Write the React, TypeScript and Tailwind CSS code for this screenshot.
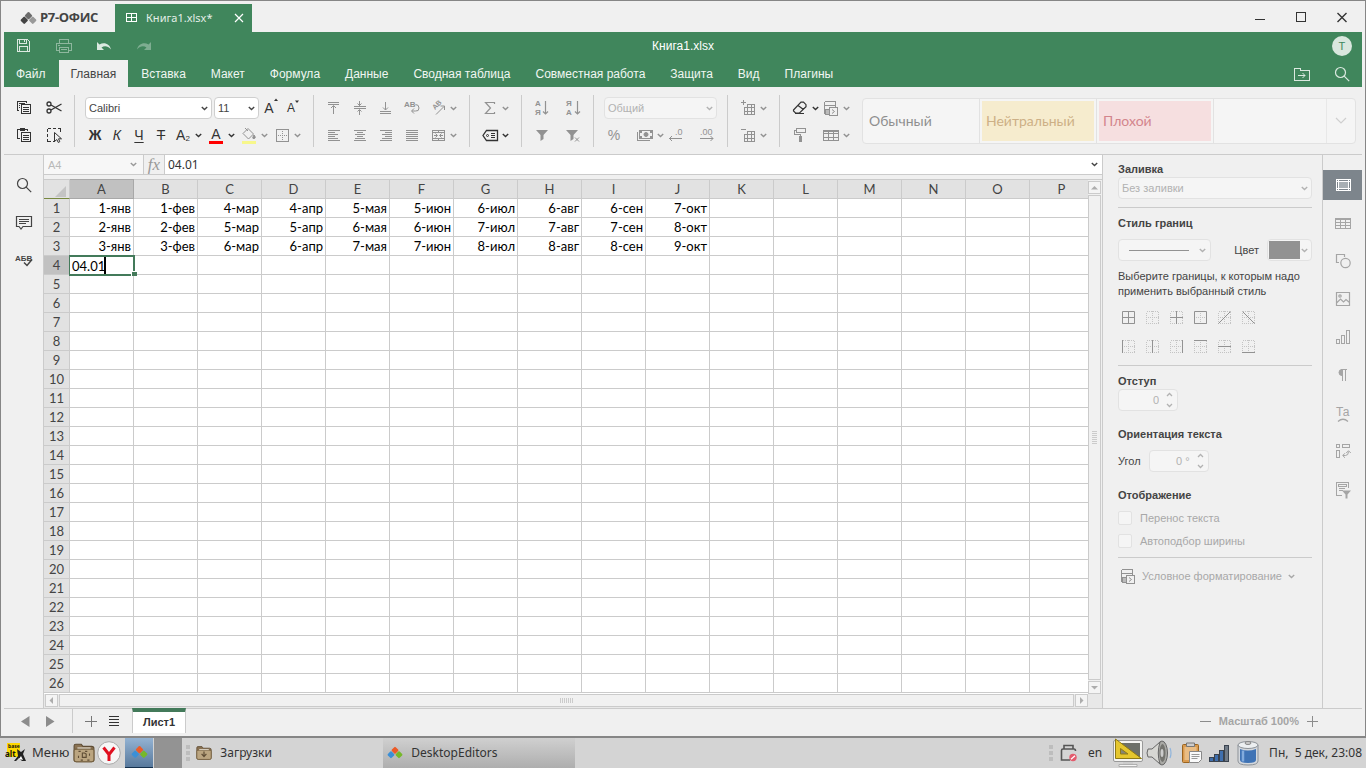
import type { ReactNode } from "react";
import clsx from "clsx";

const MENU = [
  "Файл",
  "Главная",
  "Вставка",
  "Макет",
  "Формула",
  "Данные",
  "Сводная таблица",
  "Совместная работа",
  "Защита",
  "Вид",
  "Плагины",
];

const COLUMNS = "ABCDEFGHIJKLMNOP".split("");

const CELLS: string[][] = [
  ["1-янв", "1-фев", "4-мар", "4-апр", "5-мая", "5-июн", "6-июл", "6-авг", "6-сен", "7-окт"],
  ["2-янв", "2-фев", "5-мар", "5-апр", "6-мая", "6-июн", "7-июл", "7-авг", "7-сен", "8-окт"],
  ["3-янв", "3-фев", "6-мар", "6-апр", "7-мая", "7-июн", "8-июл", "8-авг", "8-сен", "9-окт"],
];

const ROWS = Array.from({ length: 26 }, (_, i) => i + 1);

function Svg({
  w = 20,
  h = 20,
  className,
  children,
}: {
  w?: number;
  h?: number;
  className?: string;
  children: ReactNode;
}) {
  return (
    <svg
      width={w}
      height={h}
      viewBox={`0 0 ${w} ${h}`}
      fill="none"
      stroke="currentColor"
      className={clsx("shrink-0", className)}
      aria-hidden="true"
    >
      {children}
    </svg>
  );
}

function Chevron({ className }: { className?: string }) {
  return (
    <Svg w={7} h={5} className={className}>
      <path d="M.8 1l2.700 2.600L6.200 1" strokeWidth="1.400" />
    </Svg>
  );
}

function Tool({
  label,
  on,
  split,
  children,
}: {
  label: string;
  on?: boolean;
  split?: boolean;
  children: ReactNode;
}) {
  return (
    <button
      aria-label={label}
      className={clsx("flex h-[22px] shrink-0 items-center", on ? "text-[#333]" : "text-[#929292]")}
    >
      <span className="flex w-5 justify-center">{children}</span>
      {split ? (
        <span className="flex w-[11px] justify-center">
          <Chevron />
        </span>
      ) : null}
    </button>
  );
}

function Group({ children, first, last }: { children: ReactNode; first?: boolean; last?: boolean }) {
  return (
    <div
      className={clsx(
        "flex h-[52px] shrink-0 flex-col gap-[5px] pt-0.5 pr-2.5",
        first ? "pl-2" : "pl-2.5",
        last ? "" : "border-r border-[#cbcbcb]",
      )}
    >
      {children}
    </div>
  );
}

function Dropdown({
  label,
  value,
  disabled,
  className,
}: {
  label: string;
  value: string;
  disabled?: boolean;
  className?: string;
}) {
  return (
    <div className={clsx("relative shrink-0", className)}>
      <select
        aria-label={label}
        disabled={disabled}
        className={clsx(
          "block h-[22px] w-full appearance-none rounded-sm border px-[3px] text-[11px] leading-4 opacity-100",
          disabled
            ? "border-[#e2e2e2] bg-[#f5f5f5] text-[#b2b2b2]"
            : "border-[#cfcfcf] bg-white text-[#444]",
        )}
      >
        <option>{value}</option>
      </select>
      <Chevron
        className={clsx(
          "pointer-events-none absolute top-[9px] right-1",
          disabled ? "text-[#b2b2b2]" : "text-[#444]",
        )}
      />
    </div>
  );
}

function Spinner({ id, value }: { id: string; value: string }) {
  return (
    <div className="relative w-[60px]">
      <input
        id={id}
        disabled
        defaultValue={value}
        className="block h-[22px] w-full rounded-sm border border-[#e2e2e2] bg-[#f5f5f5] pr-[18px] text-right text-[11px] text-[#b2b2b2]"
      />
      <Svg w={7} h={16} className="absolute top-[3px] right-[5px] text-[#b2b2b2]">
        <path d="M1 4l2.500-2.500L6 4M1 12l2.500 2.500L6 12" strokeWidth="1.300" />
      </Svg>
    </div>
  );
}

/* ---------- shared drawings ---------- */

const GridIcon = (
  <g shapeRendering="crispEdges">
    <path d="M9 6.500h7.500v10h-10V9M6 9.500h11M6 13.500h11M9.500 6v11M13.500 6v11" />
  </g>
);

const CondIcon = (
  <Svg>
    <g shapeRendering="crispEdges">
      <path d="M3.500 3.500h11v5M3.500 3.500v12h4M3.500 7.500h11" />
      <rect x="4" y="11" width="5" height="5" fill="#bbb" />
      <rect x="8.500" y="9.500" width="8" height="8" fill="#f0f0f0" />
    </g>
    <path d="M11 11.500l2.500 2-2.500 2" />
  </Svg>
);

function Lens() {
  return (
    <Svg>
      <circle cx="8.500" cy="8.500" r="5" strokeWidth="1.200" />
      <path d="M12.200 12.200l5 5" strokeWidth="1.200" />
    </Svg>
  );
}

function Blocks({ w, gray }: { w: number; gray?: boolean }) {
  return (
    <svg width={w} height={w} viewBox="0 0 16 16" className="shrink-0" aria-hidden="true">
      <rect x="5.300" y="2.600" width="5.400" height="5.400" rx="1" transform="rotate(45 8 5.300)" fill={gray ? "#6b6b6b" : "#ec5a27"} />
      <rect x="1.300" y="7" width="5.400" height="5.400" rx="1" transform="rotate(45 4 9.700)" fill={gray ? "#444" : "#3b8fd6"} />
      <rect x="9.300" y="7" width="5.400" height="5.400" rx="1" transform="rotate(45 12 9.700)" fill={gray ? "#999" : "#76b82a"} />
    </svg>
  );
}

/* ---------- top ---------- */

function TitleBar() {
  return (
    <div className="flex h-[31px] items-end">
      <div className="flex h-7 w-[111px] items-center gap-[3px] pl-4 text-[#444]">
        <Blocks w={17} gray />
        <span className="font-['Open_Sans',sans-serif] text-[13px] font-bold tracking-tight">Р7-ОФИС</span>
      </div>
      <div className="flex h-7 w-[137px] items-center bg-[#40865c] pl-2.5 text-white">
        <Svg w={13} h={12}>
          <path d="M1.500 1.500h10v8h-10zM1 5.500h11M6.500 1v9" shapeRendering="crispEdges" />
        </Svg>
        <span className="ml-2 flex-1 font-['Noto_Sans',sans-serif] text-[11px] text-[#e4efe8]">Книга1.xlsx*</span>
        <button aria-label="Закрыть вкладку" className="mr-2">
          <Svg w={10} h={10}>
            <path d="M1 1l8 8M9 1l-8 8" strokeWidth="1.200" />
          </Svg>
        </button>
      </div>
      <div className="flex h-7 flex-1 items-center justify-end gap-[26px] pr-3 text-[#333]">
        <button aria-label="Свернуть">
          <Svg w={15} h={14}>
            <path d="M2 8.500h10" shapeRendering="crispEdges" />
          </Svg>
        </button>
        <button aria-label="Развернуть">
          <Svg w={15} h={14}>
            <path d="M2.500 1.500h9v9h-9z" shapeRendering="crispEdges" />
          </Svg>
        </button>
        <button aria-label="Закрыть">
          <Svg w={15} h={14}>
            <path d="M2.500 2l9 9M11.500 2l-9 9" strokeWidth="1.400" />
          </Svg>
        </button>
      </div>
    </div>
  );
}

function Header() {
  return (
    <header className="bg-[#40865c] text-white">
      <div className="grid h-7 grid-cols-3 items-center">
        <div className="flex items-center gap-5 pl-2.5 text-[#dbe9e0]">
          <button aria-label="Сохранить">
            <Svg>
              <g shapeRendering="crispEdges">
                <path d="M3.500 3.500h10l2 2v10h-12zM5.500 15.500v-5h8v5M5.500 4v3h7v-3M10.500 4v2" />
              </g>
            </Svg>
          </button>
          <button aria-label="Печать" className="opacity-50">
            <Svg>
              <g shapeRendering="crispEdges">
                <path d="M5.500 7V3.500h9V7M5.500 14.500h-3v-7h15v7h-3M5.500 11.500h9v5h-9zM7 13.500h6M4 9.500h2" />
              </g>
            </Svg>
          </button>
          <button aria-label="Отменить">
            <Svg>
              <path d="M3 6v8h7l-2.500-2.500c3-2 6.500-1.500 9.500 2-1-5.500-7-8-11.500-5z" fill="currentColor" stroke="none" />
            </Svg>
          </button>
          <button aria-label="Повторить" className="opacity-40">
            <Svg>
              <path d="M17 6v8h-7l2.500-2.500c-3-2-6.500-1.500-9.500 2 1-5.500 7-8 11.500-5z" fill="currentColor" stroke="none" />
            </Svg>
          </button>
        </div>
        <div className="text-center text-xs">Книга1.xlsx</div>
        <div className="flex justify-end pr-2.5">
          <button className="h-5 w-5 rounded-full bg-[#d9e7de] text-[11px] text-[#40865c]">T</button>
        </div>
      </div>
      <div className="flex h-[27px] gap-px">
        {MENU.map((name) => (
          <button
            key={name}
            className={clsx(
              "px-3 text-xs whitespace-nowrap",
              name === "Главная" ? "bg-[#f0f0f0] text-[#444]" : "text-[#f0f6f2]",
            )}
          >
            {name}
          </button>
        ))}
        <div className="ml-auto flex items-center gap-5 pr-2.5 text-[#dbe9e0]">
          <button aria-label="Открыть расположение файла">
            <Svg>
              <path d="M2.500 4.500h6v2h9v10h-15zM6 11.500h7" shapeRendering="crispEdges" />
              <path d="M10.500 9l2.500 2.500-2.500 2.500" />
            </Svg>
          </button>
          <button aria-label="Поиск">
            <Lens />
          </button>
        </div>
      </div>
    </header>
  );
}

function Lines({ rows }: { rows: number[][] }) {
  return (
    <Svg>
      <path d={rows.map(([a, b], i) => `M${a} ${5.5 + i * 2}H${b}`).join("")} shapeRendering="crispEdges" />
    </Svg>
  );
}

function Toolbar() {
  return (
    <div className="flex h-[68px] items-start border-b border-[#cbcbcb] pt-2">
      <Group first>
        <div className="flex gap-3">
          <Tool label="Копировать" on>
            <Svg>
              <g shapeRendering="crispEdges">
                <path d="M7 12.500H5.500v-9h9V5M7 5.500h6M7 7.500h1M7 9.500h1" />
                <rect x="9.500" y="6.500" width="9" height="9" />
                <path d="M11 9.500h6M11 11.500h6M11 13.500h6" />
              </g>
            </Svg>
          </Tool>
          <Tool label="Вырезать" on>
            <Svg>
              <circle cx="5" cy="6" r="2" strokeWidth="1.300" />
              <circle cx="5" cy="13" r="2" strokeWidth="1.300" />
              <path d="M7 7l10.500 6M7 12l10.500-6" strokeWidth="1.300" />
            </Svg>
          </Tool>
        </div>
        <div className="flex gap-3">
          <Tool label="Вставить" on>
            <Svg>
              <g shapeRendering="crispEdges">
                <path d="M8 13.500H5.500v-9h10V6" />
                <path d="M8 4.500h5" strokeWidth="3" />
                <rect x="9.500" y="7.500" width="9" height="9" />
                <path d="M11 10.500h6M11 12.500h6M11 14.500h6" />
              </g>
            </Svg>
          </Tool>
          <Tool label="Выделить всё" on>
            <Svg>
              <path d="M3.500 3.500h13M3.500 3.500v13M16.500 3.500v4M3.500 16.500h7" strokeDasharray="3 2" shapeRendering="crispEdges" />
              <path d="M10.500 7.500v9l2.300-2 1.500 3 1.500-.8-1.300-2.900h3z" fill="#f0f0f0" />
            </Svg>
          </Tool>
        </div>
      </Group>

      <Group>
        <div className="flex gap-0.5">
          <Dropdown label="Шрифт" value="Calibri" className="w-[127px]" />
          <Dropdown label="Размер шрифта" value="11" className="w-[45px]" />
          <Tool label="Увеличить размер шрифта" on>
            <span className="text-sm">A</span>
            <Svg w={4} h={12}>
              <path d="M0 3l2-2.500L4 3z" fill="currentColor" stroke="none" />
            </Svg>
          </Tool>
          <Tool label="Уменьшить размер шрифта" on>
            <span className="text-xs">A</span>
            <Svg w={4} h={12}>
              <path d="M0 .5h4L2 3z" fill="currentColor" stroke="none" />
            </Svg>
          </Tool>
        </div>
        <div className="flex gap-0.5">
          <Tool label="Полужирный" on>
            <b className="text-sm">Ж</b>
          </Tool>
          <Tool label="Курсив" on>
            <i className="text-sm">К</i>
          </Tool>
          <Tool label="Подчеркнутый" on>
            <span className="text-sm underline underline-offset-2">Ч</span>
          </Tool>
          <Tool label="Зачеркнутый" on>
            <span className="text-sm line-through">Т</span>
          </Tool>
          <Tool label="Подстрочные знаки" on split>
            <span className="text-sm">A</span>
            <span className="pt-2 text-[8px]">2</span>
          </Tool>
          <Tool label="Цвет шрифта" on split>
            <span className="h-[18px] w-3.5 border-b-[3px] border-[#f00] text-center text-sm leading-4">A</span>
          </Tool>
          <Tool label="Цвет заливки" split>
            <Svg>
              <path d="M9 3.500l5.500 5.500-5 5L4 8.500zM6 3l3 3" />
              <path d="M15 10q2.500 3 0 3.500T15 10z" fill="currentColor" />
              <path d="M3 17.500h14" stroke="#f7f78b" strokeWidth="3" />
            </Svg>
          </Tool>
          <Tool label="Границы" split>
            <Svg>
              <g shapeRendering="crispEdges">
                <path d="M4.500 4.500h12v12h-12z" />
                <path d="M10.500 6v10M6 10.500h10" strokeDasharray="1 1" />
              </g>
            </Svg>
          </Tool>
        </div>
      </Group>

      <Group>
        <div className="flex gap-1.5">
          <Tool label="По верхнему краю">
            <Svg>
              <path d="M4 4.500h11M4 6.500h11M9.500 8v8" shapeRendering="crispEdges" />
              <path d="M7 10l2.500-2.500L12 10" />
            </Svg>
          </Tool>
          <Tool label="По середине">
            <Svg>
              <path d="M4 8.500h12M4 10.500h12M9.500 3v5M9.500 12v5" shapeRendering="crispEdges" />
              <path d="M7.500 5.500l2 2 2-2M7.500 13.500l2-2 2 2" />
            </Svg>
          </Tool>
          <Tool label="По нижнему краю">
            <Svg>
              <path d="M4 13.500h11M4 15.500h11M9.500 4v8" shapeRendering="crispEdges" />
              <path d="M7 9.500L9.500 12 12 9.500" />
            </Svg>
          </Tool>
          <Tool label="Перенос текста">
            <Svg>
              <text x="2" y="9" fontSize="8" fontWeight="700" fill="currentColor" stroke="none">AB</text>
              <path d="M13.500 6.500q3.500 0 3.500 3.500t-3.500 3H10M12 10.500L9.500 13l2.500 2.500" />
            </Svg>
          </Tool>
          <Tool label="Ориентация" split>
            <Svg>
              <text x="7" y="12" fontSize="7" fontWeight="700" fill="currentColor" stroke="none" transform="rotate(-45 7 12)">AB</text>
              <path d="M8 16.500l8-8M12.500 8H16.500V12" />
            </Svg>
          </Tool>
        </div>
        <div className="flex gap-1.5">
          <Tool label="По левому краю">
            <Lines rows={[[4, 16], [4, 11], [4, 14], [4, 11], [4, 14], [4, 16]]} />
          </Tool>
          <Tool label="По центру">
            <Lines rows={[[4, 16], [7, 13], [5, 15], [7, 13], [5, 15], [4, 16]]} />
          </Tool>
          <Tool label="По правому краю">
            <Lines rows={[[4, 16], [9, 16], [6, 16], [9, 16], [6, 16], [4, 16]]} />
          </Tool>
          <Tool label="По ширине">
            <Lines rows={[[4, 16], [4, 16], [4, 16], [4, 16], [4, 16], [4, 16]]} />
          </Tool>
          <Tool label="Объединить" split>
            <Svg>
              <path d="M4.500 5.500h12v10h-12zM4 7.500h13M4 13.500h13M10.500 5v3M10.500 13v3M6 10.500h3M12 10.500h3" shapeRendering="crispEdges" />
              <path d="M7.500 8.500l2 2-2 2M13.500 8.500l-2 2 2 2" />
            </Svg>
          </Tool>
        </div>
      </Group>

      <Group>
        <Tool label="Сумма" split>
          <Svg>
            <path d="M14.500 6V4.500H5.500L10.500 10 5.500 15.500H14.500V14" strokeWidth="1.200" />
          </Svg>
        </Tool>
        <Tool label="Именованные диапазоны" on split>
          <Svg>
            <path d="M6.500 5.500h11v10h-11L3 10.500z" strokeWidth="1.300" />
            <circle cx="7.500" cy="10.500" r="1" />
            <path d="M11 8.500h4M11 10.500h4M11 12.500h4" shapeRendering="crispEdges" />
          </Svg>
        </Tool>
      </Group>

      <Group>
        <div className="flex gap-[11px]">
          <Tool label="Сортировка по возрастанию">
            <Svg>
              <text x="3" y="8" fontSize="8" fontWeight="700" fill="currentColor" stroke="none">А</text>
              <text x="3" y="17" fontSize="8" fontWeight="700" fill="currentColor" stroke="none">Я</text>
              <path d="M13.500 3v13M11 13.500l2.500 2.500 2.500-2.500" strokeWidth="1.200" />
            </Svg>
          </Tool>
          <Tool label="Сортировка по убыванию">
            <Svg>
              <text x="3" y="8" fontSize="8" fontWeight="700" fill="currentColor" stroke="none">Я</text>
              <text x="3" y="17" fontSize="8" fontWeight="700" fill="currentColor" stroke="none">А</text>
              <path d="M14.500 3v13M12 13.500l2.500 2.500 2.500-2.500" strokeWidth="1.200" />
            </Svg>
          </Tool>
        </div>
        <div className="flex gap-[11px]">
          <Tool label="Фильтр">
            <Svg>
              <path d="M4 5h12l-4.500 5v4l-3 2v-6z" fill="currentColor" stroke="none" />
            </Svg>
          </Tool>
          <Tool label="Очистить фильтр">
            <Svg>
              <path d="M3 5h12l-4.500 5v4l-3 2v-6z" fill="currentColor" stroke="none" />
              <path d="M12 12.500l4 4M16 12.500l-4 4" />
            </Svg>
          </Tool>
        </div>
      </Group>

      <Group>
        <Dropdown label="Числовой формат" value="Общий" disabled className="w-[113px]" />
        <div className="flex justify-between">
          <Tool label="Процентный формат">
            <span className="text-sm">%</span>
          </Tool>
          <div className="flex">
            <Tool label="Денежный формат" split>
              <Svg>
                <path d="M4.500 5.500h13v8h-13zM2.500 7v8.500H15" shapeRendering="crispEdges" />
                <circle cx="11" cy="9.500" r="2" fill="currentColor" />
                <path d="M5 6h2v2H5zM15 6h2v2h-2zM5 11h2v2H5zM15 11h2v2h-2z" fill="currentColor" stroke="none" />
              </Svg>
            </Tool>
            <Tool label="Уменьшить разрядность">
              <Svg>
                <text x="9" y="10" fontSize="9" fill="currentColor" stroke="none">.0</text>
                <path d="M3 13.500h13M6 11l-2.500 2.500L6 16" />
              </Svg>
            </Tool>
          </div>
          <Tool label="Увеличить разрядность">
            <Svg>
              <text x="3" y="10" fontSize="9" fill="currentColor" stroke="none">.00</text>
              <path d="M3 13.500h13M13.500 11l2.500 2.500-2.500 2.500" />
            </Svg>
          </Tool>
        </div>
      </Group>

      <Group>
        <Tool label="Вставить ячейки" split>
          <Svg>
            {GridIcon}
            <path d="M3 4.500h5M5.500 2v5" shapeRendering="crispEdges" />
          </Svg>
        </Tool>
        <Tool label="Удалить ячейки" split>
          <Svg>
            {GridIcon}
            <path d="M3 4.500h5" shapeRendering="crispEdges" />
          </Svg>
        </Tool>
      </Group>

      <Group last>
        <div className="flex">
          <Tool label="Очистить" on split>
            <Svg>
              <path d="M3.500 12L11 4.200h2.500l2.500 2.500v2L9.500 15h-4L3.500 13zM8 7.500l5.500 4M5 15.500h9" strokeWidth="1.200" />
            </Svg>
          </Tool>
          <Tool label="Условное форматирование" split>
            {CondIcon}
          </Tool>
        </div>
        <div className="flex gap-[11px]">
          <Tool label="Копировать стиль">
            <Svg>
              <path d="M6.500 3.500h9v4h-9zM6 5.500H4.500v4h6V11" shapeRendering="crispEdges" />
              <path d="M9 11h3v6H9z" fill="currentColor" stroke="none" />
            </Svg>
          </Tool>
          <Tool label="Форматировать как таблицу" split>
            <Svg>
              <path d="M2.500 5.500h15v10h-15zM2 8.500h16M2 12.500h16M7.500 5v11M12.500 5v11M2 6.500h16" shapeRendering="crispEdges" />
            </Svg>
          </Tool>
        </div>
      </Group>

      <div className="mt-[3px] mr-1.5 flex h-[46px] min-w-0 flex-1 rounded-sm border border-[#e2e2e2] bg-[#f5f5f5] font-[Lato,sans-serif] text-sm">
        <button className="w-[117px] border-r border-[#e2e2e2] px-1.5 text-left text-[#8f8f8f]">Обычный</button>
        <button className="w-[117px] border-r border-[#e2e2e2] p-0.5 text-left text-[#cdb086]">
          <span className="flex h-full items-center bg-[#f6ecce] pl-1">Нейтральный</span>
        </button>
        <button className="w-[117px] border-r border-[#e2e2e2] p-0.5 text-left text-[#d3858c]">
          <span className="flex h-full items-center bg-[#f6dfe0] pl-1">Плохой</span>
        </button>
        <span className="flex-1" />
        <button aria-label="Все стили" className="flex w-[29px] items-center justify-center border-l border-[#e8e8e8] text-[#cfcfcf]">
          <Svg w={12} h={8}>
            <path d="M1 1l5 5 5-5" strokeWidth="1.200" />
          </Svg>
        </button>
      </div>
    </div>
  );
}

/* ---------- sheet ---------- */

function FormulaBar() {
  return (
    <div className="flex h-5 border-b border-[#cbcbcb] bg-white">
      <div className="relative w-[99px]">
        <input
          aria-label="Имя ячейки"
          disabled
          defaultValue="A4"
          className="block h-[19px] w-full bg-[#f7f7f7] pl-1 text-[11px] text-[#b9b9b9]"
        />
        <Chevron className="absolute top-[7px] right-1.5 text-[#999]" />
      </div>
      <button
        aria-label="Вставить функцию"
        className="w-[22px] border-x border-[#cbcbcb] bg-[#f0f0f0] font-['Liberation_Serif',serif] text-[17px] leading-4 text-[#999] italic"
      >
        fx
      </button>
      <input
        aria-label="Строка формул"
        defaultValue="04.01"
        className="min-w-0 flex-1 bg-white pl-[3px] font-['Noto_Sans',sans-serif] text-xs text-[#333]"
      />
      <button aria-label="Развернуть строку формул" className="flex w-4 items-center justify-center text-[#444]">
        <Chevron />
      </button>
    </div>
  );
}

function EditorCell() {
  return (
    <td className="relative border-r border-b border-[#cbcbcb]">
      <div className="absolute -top-px -left-px flex h-[21px] w-[66px] items-center border-2 border-l border-[#437a5a] bg-white pl-0.5">
        <input aria-label="Ячейка A4" defaultValue="04.01" className="w-8 text-[13px] text-black" />
        <span className="h-[17px] w-0.5 bg-black" />
        <span className="absolute -right-1 -bottom-0.5 h-[5px] w-[6px] border-t border-l border-white bg-[#437a5a]" />
      </div>
    </td>
  );
}

function Sheet() {
  return (
    <table className="w-full min-w-[1050px] table-fixed border-separate border-spacing-0 bg-white font-[Lato,sans-serif] text-[13px] leading-[18px]">
      <colgroup>
        <col className="w-[26px]" />
        {COLUMNS.map((c) => (
          <col key={c} className="w-16" />
        ))}
        <col />
      </colgroup>
      <thead>
        <tr className="h-5 bg-[#e2e2e2] text-[#444]">
          <th className="border-t border-r border-b border-[#cbcbcb] border-b-[#77883f] p-0">
            <Svg w={11} h={11} className="mt-1 mr-[3px] ml-auto block">
              <path d="M11 0v11H0z" fill="#c4c4c4" stroke="none" />
            </Svg>
          </th>
          {COLUMNS.map((c) => (
            <th
              key={c}
              className={clsx(
                "border-t border-r border-b p-0 font-normal",
                c === "A" ? "border-[#a8a8a8] bg-[#c1c1c1]" : "border-[#cbcbcb]",
              )}
            >
              {c}
            </th>
          ))}
          <th className="border-y border-[#cbcbcb] p-0" />
        </tr>
      </thead>
      <tbody>
        {ROWS.map((n) => (
          <tr key={n} className="h-[19px]">
            <th
              className={clsx(
                "border-r border-b border-[#cbcbcb] p-0 font-normal text-[#444]",
                n === 4 ? "bg-[#c1c1c1]" : "bg-[#e2e2e2]",
              )}
            >
              {n}
            </th>
            {COLUMNS.map((c, i) =>
              n === 4 && i === 0 ? (
                <EditorCell key={c} />
              ) : (
                <td key={c} className="border-r border-b border-[#cbcbcb] p-0 pr-0.5 text-right text-black">
                  {CELLS[n - 1]?.[i]}
                </td>
              ),
            )}
            <td className="border-b border-[#cbcbcb] p-0" />
          </tr>
        ))}
      </tbody>
    </table>
  );
}

function ScrollArrow({ label, d }: { label: string; d: string }) {
  return (
    <button
      aria-label={label}
      className="flex h-[13px] w-[13px] shrink-0 items-center justify-center border border-[#cbcbcb] bg-[#f4f4f4] text-[#adadad]"
    >
      <Svg w={7} h={7}>
        <path d={d} fill="currentColor" stroke="none" />
      </Svg>
    </button>
  );
}

function Workbook() {
  return (
    <main className="flex min-w-0 flex-1 flex-col border-x border-[#cbcbcb]">
      <FormulaBar />
      <div className="mt-1 flex min-h-0 flex-1">
        <div className="min-w-0 flex-1 overflow-hidden bg-white">
          <Sheet />
        </div>
        <div className="flex w-3.5 flex-col gap-px border-t border-[#cbcbcb] pt-px">
          <ScrollArrow label="Вверх" d="M0 5.500L3.500 2 7 5.500z" />
          <div className="flex w-[13px] flex-1 items-center justify-center border border-[#cbcbcb] bg-[#f1f1f1]">
            <Svg w={5} h={13} className="text-[#cbcbcb]">
              <path d="M0 .5h5M0 2.500h5M0 4.500h5M0 6.500h5M0 8.500h5M0 10.500h5M0 12.500h5" shapeRendering="crispEdges" />
            </Svg>
          </div>
          <ScrollArrow label="Вниз" d="M0 2l3.500 3.500L7 2z" />
        </div>
      </div>
      <div className="flex h-3.5 gap-px bg-[#e8e8e8] pr-3.5 pl-px">
        <ScrollArrow label="Влево" d="M5 0L1.500 3.500 5 7z" />
        <div className="flex h-[13px] flex-1 items-center justify-center border border-[#cbcbcb] bg-[#f1f1f1]">
          <Svg w={13} h={5} className="text-[#cbcbcb]">
            <path d="M.5 0v5M2.500 0v5M4.500 0v5M6.500 0v5M8.500 0v5M10.500 0v5M12.500 0v5" shapeRendering="crispEdges" />
          </Svg>
        </div>
        <ScrollArrow label="Вправо" d="M2 0l3.500 3.500L2 7z" />
      </div>
    </main>
  );
}

function LeftRail() {
  return (
    <nav className="flex w-[39px] shrink-0 flex-col items-center gap-[18px] pt-5 text-[#444]">
      <button aria-label="Поиск">
        <Lens />
      </button>
      <button aria-label="Комментарии">
        <Svg>
          <path d="M2.500 3.500h15v10H9l-2 2.500-2-2.500H2.500zM5 6.500h10M5 8.500h10M5 10.500h7" strokeWidth="1.200" />
        </Svg>
      </button>
      <button aria-label="Проверка орфографии">
        <Svg>
          <text x="1" y="10" fontSize="8" fontWeight="700" fill="currentColor" stroke="none">АБВ</text>
          <path d="M10 11.500l3 3 5-6" strokeWidth="1.500" />
        </Svg>
      </button>
    </nav>
  );
}

/* ---------- right panel ---------- */

const BORDERS: { label: string; d: string }[][] = [
  [
    { label: "Все границы", d: "M4.500 4.500h12v12h-12zM4 10.500h13M10.500 4v13" },
    { label: "Без границ", d: "" },
    { label: "Внутренние границы", d: "M4 10.500h13M10.500 4v13" },
    { label: "Внешние границы", d: "M4.500 4.500h12v12h-12z" },
    { label: "Диагональ вверх", d: "M4.500 16.500l12-12" },
    { label: "Диагональ вниз", d: "M4.500 4.500l12 12" },
  ],
  [
    { label: "Левая граница", d: "M4.500 4v13" },
    { label: "Внутренняя вертикальная", d: "M10.500 4v13" },
    { label: "Правая граница", d: "M16.500 4v13" },
    { label: "Верхняя граница", d: "M4 4.500h13" },
    { label: "Внутренняя горизонтальная", d: "M4 10.500h13" },
    { label: "Нижняя граница", d: "M4 16.500h13" },
  ],
];

function Heading({ children, className }: { children: ReactNode; className?: string }) {
  return <h2 className={clsx("text-[11px] leading-4 font-bold text-[#444]", className)}>{children}</h2>;
}

function Check({ label }: { label: string }) {
  return (
    <label className="mt-[7px] flex h-4 items-center gap-2 text-[#a8a8a8]">
      <input
        type="checkbox"
        disabled
        className="h-3.5 w-3.5 appearance-none rounded-xs border border-[#e2e2e2] bg-[#f5f5f5]"
      />
      {label}
    </label>
  );
}

function SettingsPanel() {
  return (
    <aside className="w-[219px] shrink-0 pt-1.5 pr-2.5 pl-[15px] text-[11px] leading-4 text-[#444]">
      <Heading>Заливка</Heading>
      <Dropdown label="Заливка" value="Без заливки" disabled />
      <hr className="mt-2 border-[#cbcbcb]" />

      <Heading className="mt-[7px]">Стиль границ</Heading>
      <div className="mt-2 flex items-center">
        <button
          aria-label="Стиль линии"
          className="flex h-[22px] w-[93px] items-center justify-between rounded-sm border border-[#e2e2e2] bg-[#f5f5f5] pr-1 pl-2.5 text-[#b2b2b2]"
        >
          <span className="h-px w-[60px] bg-[#929292]" />
          <Chevron />
        </button>
        <span className="ml-auto pr-2">Цвет</span>
        <button
          aria-label="Цвет"
          className="flex h-[22px] w-[45px] items-center justify-between rounded-sm border border-[#e2e2e2] bg-[#f5f5f5] pr-[3px] pl-px text-[#b2b2b2]"
        >
          <span className="h-[18px] w-[31px] bg-[#929292]" />
          <Chevron />
        </button>
      </div>
      <p className="mt-2 leading-[15px]">Выберите границы, к которым надо применить выбранный стиль</p>
      <div className="mt-2 flex flex-col gap-[9px]">
        {BORDERS.map((row, i) => (
          <div key={i} className="flex gap-1 text-[#929292]">
            {row.map((b) => (
              <button key={b.label} aria-label={b.label}>
                <Svg>
                  <path
                    d="M4.500 4.500h12v12h-12zM4 10.500h13M10.500 4v13"
                    stroke="#c4c4c4"
                    strokeDasharray="1 1"
                    shapeRendering="crispEdges"
                  />
                  {b.d ? <path d={b.d} /> : null}
                </Svg>
              </button>
            ))}
          </div>
        ))}
      </div>
      <hr className="mt-[9px] border-[#cbcbcb]" />

      <Heading className="mt-[7px]">
        <label htmlFor="indent">Отступ</label>
      </Heading>
      <Spinner id="indent" value="0" />

      <Heading className="mt-[15px]">Ориентация текста</Heading>
      <div className="mt-2 flex items-center gap-2">
        <label htmlFor="angle">Угол</label>
        <Spinner id="angle" value="0 °" />
      </div>

      <Heading className="mt-[15px]">Отображение</Heading>
      <Check label="Перенос текста" />
      <Check label="Автоподбор ширины" />
      <hr className="mt-2 border-[#cbcbcb]" />

      <button className="mt-2 flex h-5 items-center gap-1 text-[#a8a8a8]">
        <span className="text-[#929292]">{CondIcon}</span>
        <span>Условное форматирование</span>
        <Chevron className="ml-0.5" />
      </button>
    </aside>
  );
}

const RAIL: { label: string; icon: ReactNode }[] = [
  {
    label: "Параметры ячейки",
    icon: (
      <g shapeRendering="crispEdges">
        <rect x="6" y="7" width="9" height="7" fill="#a8afb4" stroke="none" />
        <path d="M3.500 4.500h14v11h-14zM3 6.500h15M3 13.500h15M5.500 4v12M15.500 4v12" />
      </g>
    ),
  },
  {
    label: "Параметры таблицы",
    icon: <path d="M2.500 5.500h15v10h-15zM2 6.500h16M2 9.500h16M2 12.500h16M7.500 5v11M12.500 5v11" shapeRendering="crispEdges" />,
  },
  {
    label: "Параметры фигуры",
    icon: (
      <>
        <path d="M6 11.500H3.500v-8h8V6" strokeWidth="1.200" />
        <circle cx="12.500" cy="12" r="4.700" strokeWidth="1.200" />
      </>
    ),
  },
  {
    label: "Параметры изображения",
    icon: (
      <g strokeWidth="1.200">
        <path d="M3.500 3.500h13v13h-13zM3.500 14l4-4 3 3 2.500-2.500 3.500 3" />
        <circle cx="7" cy="7" r="1.200" />
      </g>
    ),
  },
  {
    label: "Параметры диаграммы",
    icon: <path d="M3.500 12.500h3v4h-3zM8.500 8.500h3v8h-3zM13.500 3.500h3v13h-3z" shapeRendering="crispEdges" />,
  },
  {
    label: "Параметры абзаца",
    icon: (
      <>
        <path d="M9 4.500v6a3 3 0 010-6z" fill="currentColor" />
        <path d="M8 4.500h6M9.500 4v12M12.500 4v12" shapeRendering="crispEdges" />
      </>
    ),
  },
  {
    label: "Параметры Text Art",
    icon: (
      <>
        <text x="3" y="13" fontSize="12" fill="currentColor" stroke="none">Та</text>
        <path d="M5 18.500q5-4.500 10 0" strokeWidth="1.200" />
      </>
    ),
  },
  {
    label: "Параметры сводной таблицы",
    icon: (
      <>
        <path d="M3.500 3.500h3v3h-3zM9.500 3.500h7v3h-7zM3.500 9.500h3v7h-3z" shapeRendering="crispEdges" />
        <path d="M10 14.500h2.500q3 0 3-4M12 12.200L9.700 14.500l2.300 2.300M13.200 12l2.300-2.300L17.800 12" />
      </>
    ),
  },
  {
    label: "Параметры среза",
    icon: (
      <>
        <path d="M9 16.500H3.500v-13h12V9M5.500 5.500h8v2h-8zM5.500 9.500h6M5.500 11.500h4" shapeRendering="crispEdges" />
        <path d="M9 11.500h9l-3.500 4v4h-2v-4z" fill="currentColor" stroke="none" />
      </>
    ),
  },
];

function RightRail() {
  return (
    <nav className="flex w-10 shrink-0 flex-col gap-2 border-l border-[#cbcbcb] pt-[15px]">
      {RAIL.map((item, i) => (
        <button
          key={item.label}
          aria-label={item.label}
          className={clsx(
            "flex h-[30px] items-center justify-center",
            i === 0 ? "bg-[#7d858c] text-white" : "text-[#a5a5a5]",
          )}
        >
          <Svg>{item.icon}</Svg>
        </button>
      ))}
    </nav>
  );
}

function StatusBar() {
  return (
    <footer className="flex h-7 items-start border-t border-[#cbcbcb] text-[11px]">
      <div className="flex h-6 w-[69px] items-center gap-4 border-r border-[#cbcbcb] pl-[17px] text-[#8c8c8c]">
        <button aria-label="Предыдущий лист">
          <Svg w={9} h={11}>
            <path d="M8.500 0v11L0 5.500z" fill="currentColor" stroke="none" />
          </Svg>
        </button>
        <button aria-label="Следующий лист">
          <Svg w={9} h={11}>
            <path d="M0 0v11l8.500-5.500z" fill="currentColor" stroke="none" />
          </Svg>
        </button>
      </div>
      <div className="flex h-6 items-center gap-3 pr-[13px] pl-3 text-[#777]">
        <button aria-label="Добавить лист">
          <Svg w={12} h={12}>
            <path d="M0 6.500h12M6.500 1v11" shapeRendering="crispEdges" />
          </Svg>
        </button>
        <button aria-label="Список листов">
          <Svg w={10} h={12} className="text-[#333]">
            <path d="M0 1.500h10M0 4.500h10M0 7.500h10M0 10.500h10" shapeRendering="crispEdges" />
          </Svg>
        </button>
      </div>
      <button className="-mt-px h-[25px] border-x border-t-4 border-[#cbcbcb] border-t-[#437a5a] bg-white px-2.5 font-bold text-[#333]">
        Лист1
      </button>
      <div className="ml-auto flex h-6 items-center gap-2 pr-11 font-bold text-[#a5a5a5]">
        <button aria-label="Уменьшить">
          <Svg w={11} h={11} className="text-[#8c8c8c]">
            <path d="M0 5.500h11" shapeRendering="crispEdges" />
          </Svg>
        </button>
        <span>Масштаб 100%</span>
        <button aria-label="Увеличить">
          <Svg w={11} h={11} className="text-[#8c8c8c]">
            <path d="M0 5.500h11M5.500 0v11" shapeRendering="crispEdges" />
          </Svg>
        </button>
      </div>
    </footer>
  );
}

/* ---------- desktop taskbar ---------- */

function Folder({ w, mark }: { w: number; mark: "home" | "down" }) {
  return (
    <svg width={w} height={w} viewBox="0 0 20 20" className="shrink-0" aria-hidden="true">
      <path d="M1 3.500q0-1.500 1.500-1.500h5l1.500 2h8q2 0 2 2v10q0 2-2 2H3q-2 0-2-2z" fill="#8a7252" stroke="#5f4d35" />
      <path d="M4 5h12v3H4z" fill="#f3efe6" />
      <path d="M1 8q0-1.500 1.500-1.500h15Q19 6.500 19 8v8q0 2-2 2H3q-2 0-2-2z" fill="#bba580" stroke="#75603f" />
      {mark === "down" ? (
        <path d="M10 8v5M7 11l3 3.500 3-3.500" stroke="#5f4d35" strokeWidth="1.500" fill="none" />
      ) : (
        <g stroke="#5f4d35" fill="none">
          <path d="M5 8.500h10v8H5z" strokeDasharray="2 4" />
          <path d="M8.500 10h2l1.500 1v3h-3.500z" />
        </g>
      )}
    </svg>
  );
}

function Grip() {
  return (
    <svg width="4" height="17" viewBox="0 0 4 17" className="shrink-0" aria-hidden="true">
      <path d="M0 0h4v4H0zM0 6h4v4H0zM0 12h4v4H0z" fill="#bdbdbd" />
    </svg>
  );
}

function Tray() {
  return (
    <div className="ml-auto flex items-center pr-1 text-xs">
      <Grip />
      <svg width="18" height="18" viewBox="0 0 18 18" className="ml-1.5" aria-hidden="true">
        <path d="M5 5V1.500h9V5M11 16H2.500V6.500q0-1.500 1.500-1.500h11q1.500 0 1.500 2" fill="none" stroke="#555" strokeWidth="1.600" />
        <circle cx="14" cy="13.500" r="3.700" fill="#e35b6d" />
        <path d="M12 15.300l4-3.600" stroke="#fff" strokeWidth="1.200" />
      </svg>
      <span className="ml-[11px]">en</span>
      <svg width="32" height="30" viewBox="0 0 32 30" className="ml-2.5" aria-hidden="true">
        <rect x="1.500" y="2.500" width="29" height="21" rx="1.500" fill="#f4f4f2" stroke="#999" />
        <rect x="4" y="5" width="24" height="16" fill="#6d7069" />
        <path d="M11 24h10v3H11z" fill="#ccc" />
        <path d="M7 26.500h18v2H7z" fill="#f5f5f5" stroke="#999" strokeWidth=".7" />
        <path d="M3.500 1l26 19.500H3.500z" fill="#e5c62e" stroke="#8f7a14" />
        <path d="M8.500 10.500l7.500 5.500H8.500z" fill="#858577" stroke="#8f7a14" />
      </svg>
      <svg width="28" height="26" viewBox="0 0 28 26" className="ml-px" aria-hidden="true">
        <ellipse cx="17" cy="13" rx="5.500" ry="12" fill="#a9a9a5" stroke="#666" />
        <path d="M3 9h4l8-7q-3.500 11 0 22l-8-7H3q-2-4 0-8z" fill="#d7d7d3" stroke="#666" />
        <ellipse cx="17.500" cy="13" rx="3" ry="9" fill="#74746f" />
        <ellipse cx="17" cy="13" rx="1.500" ry="4" fill="#ccc" />
        <path d="M25 8q2 5 0 10" fill="none" stroke="#8fb4dc" strokeWidth="1.200" />
      </svg>
      <svg width="22" height="22" viewBox="0 0 22 22" className="ml-2" aria-hidden="true">
        <rect x="1.500" y="2.500" width="16" height="18" rx="1" fill="#d99a4e" stroke="#9a6420" />
        <rect x="3.500" y="5" width="12" height="13" fill="#e9bd85" />
        <path d="M5.500 1h8v3.500h-8z" fill="#ccc" stroke="#777" />
        <path d="M8.500 9.500h12v8l-3 3h-9z" fill="#fafafa" stroke="#888" />
        <path d="M10.500 12.500h8M10.500 14.500h8M10.500 16.500h6" stroke="#999" />
      </svg>
      <svg width="22" height="20" viewBox="0 0 22 20" className="ml-[5px]" aria-hidden="true">
        <g stroke="#3a434f">
          <rect x="1.500" y="14.500" width="4" height="4" fill="#3f6fae" />
          <rect x="6.500" y="11.500" width="4" height="7" fill="#3f6fae" />
          <rect x="11.500" y="7.500" width="4" height="11" fill="#3f6fae" />
          <rect x="16.500" y="2.500" width="4" height="16" fill="#707a86" />
        </g>
      </svg>
      <svg width="22" height="26" viewBox="0 0 22 26" className="ml-[7px]" aria-hidden="true">
        <path d="M1 5v16q0 4 10 4t10-4V5" fill="#d4d8dd" stroke="#8d9298" />
        <ellipse cx="11" cy="5" rx="10" ry="3.500" fill="#eceff1" stroke="#8d9298" />
        <path d="M3 9v11q0 3 8 3t8-3V9q-8 3-16 0z" fill="#3f73b5" />
        <path d="M6 10.500v11" stroke="#82abdd" strokeWidth="2.500" />
        <ellipse cx="11" cy="3" rx="3" ry="1.500" fill="#ccc" stroke="#888" />
      </svg>
      <span className="ml-2.5 whitespace-pre">Пн,  5 дек, 23:08</span>
    </div>
  );
}

function Taskbar() {
  return (
    <div className="flex h-[30px] shrink-0 items-center bg-[#d4d4d4] font-['Noto_Sans',sans-serif] text-[13px] text-[#333]">
      <button className="flex items-center gap-[5px] pl-[5px]">
        <svg width="22" height="20" viewBox="0 0 22 20" className="shrink-0" aria-hidden="true">
          <rect x="2" width="13" height="14" fill="#ffd800" />
          <text x="3" y="5" fontSize="5" fontWeight="700" fill="#111">base</text>
          <text x="0" y="14" fontSize="8" fontWeight="700" fill="#111">alt</text>
          <path d="M12 6l4 3 4-3-2 5 3 7h-4l-3-3-3 3h-2l4-5z" fill="#222" />
          <path d="M16 13l2 4-4-1z" fill="#fff" />
        </svg>
        <span>Меню</span>
      </button>
      <button aria-label="Домашняя папка" className="ml-1">
        <Folder w={22} mark="home" />
      </button>
      <button aria-label="Яндекс Браузер" className="ml-0.5">
        <svg width="24" height="24" viewBox="0 0 24 24" aria-hidden="true">
          <circle cx="12" cy="12" r="11.300" fill="#f6f6f6" stroke="#aaa" />
          <path d="M6.500 6.500l5.500 7 5.500-7M12 13v7" fill="none" stroke="#e01020" strokeWidth="3" />
        </svg>
      </button>
      <button
        aria-label="Р7-Офис"
        className="ml-1 flex h-full w-7 items-center justify-center border-b border-[#14304d] bg-linear-to-b from-[#94b3d3] to-[#58799c]"
      >
        <Blocks w={17} />
      </button>
      <button aria-label="Рабочий стол" className="ml-px h-full w-7 bg-[#939393]" />
      <span className="ml-1">
        <Grip />
      </span>
      <button className="ml-1.5 flex w-[187px] items-center gap-2 text-xs">
        <Folder w={16} mark="down" />
        <span>Загрузки</span>
      </button>
      <button className="flex h-full w-48 items-center gap-2 bg-linear-to-b from-[#d0d0d0] to-[#aeaeae] pl-1 text-xs">
        <Blocks w={16} />
        <span>DesktopEditors</span>
      </button>
      <Tray />
    </div>
  );
}

export default function App() {
  return (
    <div className="flex h-screen flex-col overflow-hidden font-['Liberation_Sans',Arial,sans-serif]">
      <div className="flex min-h-0 flex-1 flex-col border border-b-2 border-[#868686] bg-[#f0f0f0] px-[3px]">
        <TitleBar />
        <Header />
        <Toolbar />
        <div className="flex min-h-0 flex-1">
          <LeftRail />
          <Workbook />
          <SettingsPanel />
          <RightRail />
        </div>
        <StatusBar />
      </div>
      <Taskbar />
    </div>
  );
}
